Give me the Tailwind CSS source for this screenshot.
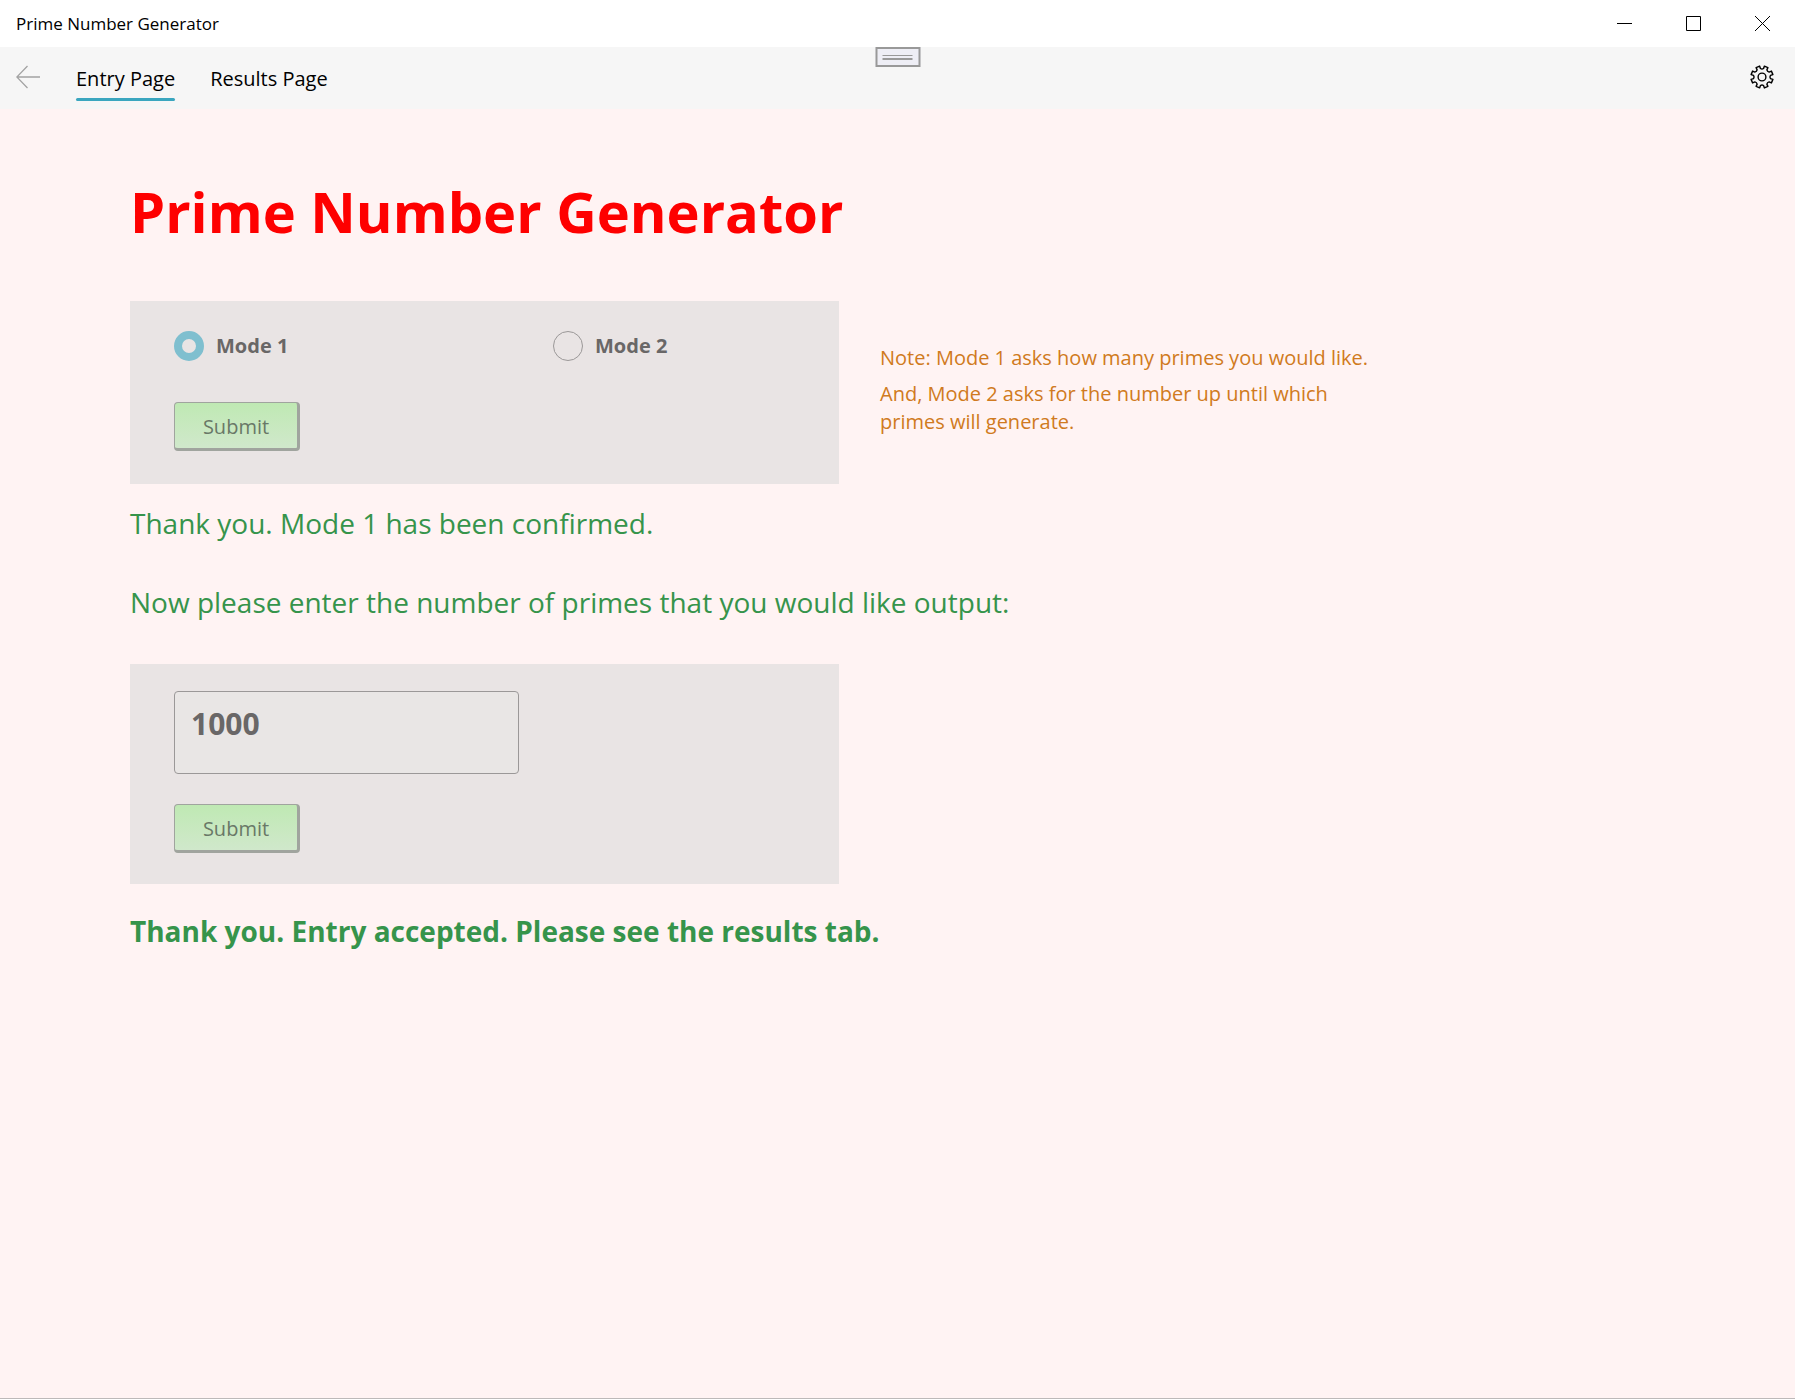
<!DOCTYPE html>
<html lang="en">
<head>
<meta charset="utf-8">
<meta name="viewport" content="width=device-width, initial-scale=1">
<title>Prime Number Generator</title>
<script src="https://cdn.jsdelivr.net/npm/@tailwindcss/browser@4"></script>
</head>
<body class="flex min-h-screen flex-col border-b border-[#bdb9b9] bg-[#fff3f3] font-['Open_Sans','Noto_Sans',sans-serif] text-black">
  <header>
    <div class="flex h-[47px] items-center justify-between bg-white pl-4">
      <span class="text-[17px] leading-6">Prime Number Generator</span>
      <div class="flex h-full gap-1">
        <button type="button" aria-label="Minimize" class="flex w-[65px] items-center justify-center">
          <svg width="15" height="15" viewBox="0 0 15 15" stroke="#000" fill="none"><path d="M0 7.500h15"/></svg>
        </button>
        <button type="button" aria-label="Maximize" class="flex w-[65px] items-center justify-center">
          <svg width="15" height="15" viewBox="0 0 15 15" stroke="#000" fill="none"><path d="M.5.5h14v14h-14z"/></svg>
        </button>
        <button type="button" aria-label="Close" class="flex w-[65px] items-center justify-center">
          <svg width="15" height="15" viewBox="0 0 15 15" stroke="#000" fill="none"><path d="M0 0l15 15M15 0L0 15"/></svg>
        </button>
      </div>
    </div>
    <nav class="relative flex h-[62px] items-center bg-[#f6f6f6] pb-0.5 pl-4 pr-5">
      <button type="button" aria-label="Back" disabled class="mr-9">
        <svg width="24" height="24" viewBox="0 0 24 24" stroke="#a3a3a3" stroke-width="1.3" fill="none"><path d="M24 12H1M11.500 1L.8 12l10.700 11"/></svg>
      </button>
      <a href="#entry" class="mr-[35px] flex h-full flex-col pt-[18px] text-xl leading-7">Entry Page<span class="mt-[5px] h-[3px] rounded-full bg-[#3aa6bf]"></span></a>
      <a href="#results" class="flex h-full flex-col pt-[18px] text-xl leading-7">Results Page</a>
      <button type="button" aria-label="Settings" class="ml-auto">
        <svg width="26" height="26" viewBox="-13 -13 26 26" stroke="#000" stroke-width="1.4" stroke-linejoin="round" fill="none">
          <path d="M8.460 1.570L10.900 2.400L9.400 5.900L7.090 4.870Q5.300 5.300 4.870 7.090L5.900 9.400L2.400 10.900L1.570 8.460Q0 7.400 -1.570 8.460L-2.400 10.900L-5.900 9.400L-4.870 7.090Q-5.300 5.300 -7.090 4.870L-9.400 5.900L-10.900 2.400L-8.460 1.570Q-7.400 0 -8.460 -1.570L-10.900 -2.400L-9.400 -5.900L-7.090 -4.870Q-5.300 -5.300 -4.870 -7.090L-5.900 -9.400L-2.400 -10.900L-1.570 -8.460Q0 -7.400 1.570 -8.460L2.400 -10.900L5.900 -9.400L4.870 -7.090Q5.300 -5.300 7.090 -4.870L9.400 -5.900L10.900 -2.400L8.460 -1.570Q7.400 0 8.460 1.570Z"/>
          <circle r="3.900"/>
        </svg>
      </button>
      <div class="absolute left-1/2 top-0 flex h-5 w-[45px] -translate-x-1/2 flex-col items-center justify-center gap-0.5 border-2 border-[#999] bg-[#eeeef5]">
        <span class="h-px w-[30px] bg-[#999]"></span>
        <span class="h-0.5 w-[30px] bg-[#999]"></span>
      </div>
    </nav>
  </header>

  <main id="entry" class="flex-1 pl-[130px] pr-10 pt-[62px]">
    <h1 class="text-[56px] font-bold leading-20 text-[#fe0000]">Prime Number Generator</h1>

    <div class="mt-[50px] flex items-start gap-[41px]">
      <form class="h-[183px] w-[709px] bg-[#e9e4e4] px-11 pt-[30px]">
        <div class="grid grid-cols-[379px_1fr] text-xl font-bold leading-[30px] text-[#696767]">
          <label class="flex items-center gap-3"><input type="radio" name="mode" checked disabled class="size-[30px] appearance-none rounded-full border-8 border-[#7fbfcf]">Mode 1</label>
          <label class="flex items-center gap-3"><input type="radio" name="mode" disabled class="size-[30px] appearance-none rounded-full border border-[#9b9898]">Mode 2</label>
        </div>
        <button type="submit" disabled class="mt-[41px] h-[49px] w-[126px] rounded border border-b-3 border-r-3 border-[#a0a49e] bg-linear-to-b from-[#bfe9b3] to-[#d0e8cb] pt-0.5 text-xl text-[#697867]">Submit</button>
      </form>
      <div class="w-[500px] pt-[43px] text-xl leading-7 text-[#d07a20]">
        <p>Note: Mode 1 asks how many primes you would like.</p>
        <p class="mt-2">And, Mode 2 asks for the number up until which<br>primes will generate.</p>
      </div>
    </div>

    <p class="mt-5 text-[28px] leading-[38px] text-[#36944b]">Thank you. Mode 1 has been confirmed.</p>
    <label for="count" class="mt-[41px] block text-[28px] leading-[38px] text-[#36944b]">Now please enter the number of primes that you would like output:</label>

    <form class="mt-[43px] h-[220px] w-[709px] bg-[#e9e4e4] px-11 pt-[27px]">
      <input id="count" type="text" value="1000" disabled class="block h-[83px] w-[345px] rounded border border-[#9b9898] bg-[#e9e6e5] px-4 pb-[18px] text-[30px] font-bold text-[#696767]">
      <button type="submit" disabled class="mt-[30px] h-[49px] w-[126px] rounded border border-b-3 border-r-3 border-[#a0a49e] bg-linear-to-b from-[#bfe9b3] to-[#d0e8cb] pt-0.5 text-xl text-[#697867]">Submit</button>
    </form>

    <p class="mt-7 text-[28px] font-bold leading-[38px] text-[#36944b]">Thank you. Entry accepted. Please see the results tab.</p>
  </main>
</body>
</html>
